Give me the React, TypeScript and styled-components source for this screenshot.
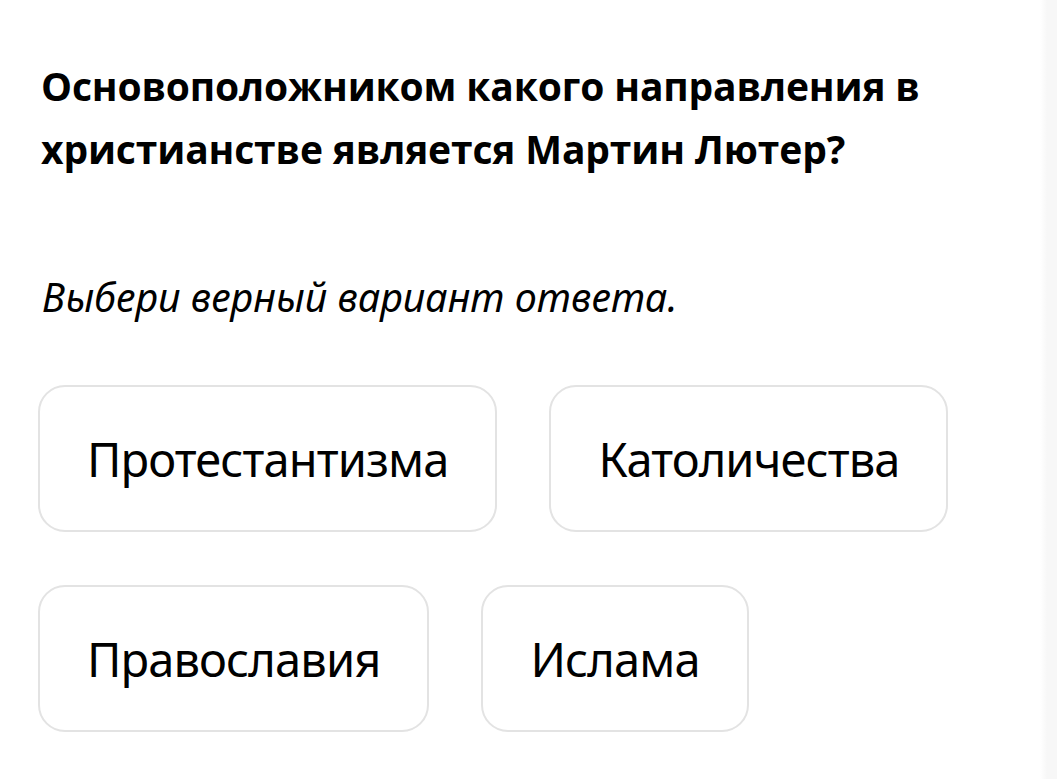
import React from "react";
import styled, { createGlobalStyle } from "styled-components";

const GlobalStyle = createGlobalStyle`
  html, body {
    margin: 0;
    padding: 0;
    background: #ffffff;
  }
  body {
    font-family: "Noto Sans", "Open Sans", sans-serif;
    color: #000;
  }
`;

const Page = styled.div`
  width: 1057px;
  height: 779px;
  box-sizing: border-box;
  display: flex;
  overflow: hidden;
  background: #fff;
`;

const Content = styled.main`
  flex: 1;
  padding: 54px 0 0 38px;
  display: flex;
  flex-direction: column;
  align-items: flex-start;
`;

const Edge = styled.div`
  width: 17px;
  flex: none;
  background: linear-gradient(to right, #ffffff 0px, #f7f7f7 7px, #f7f7f7 100%);
`;

const Question = styled.h1`
  margin: 0 0 0 3px;
  font-family: "Open Sans", "Noto Sans", sans-serif;
  font-weight: 700;
  font-size: 39px;
  line-height: 63px;
  letter-spacing: -0.15px;
  color: #000;
`;

const Hint = styled.p`
  margin: 92px 0 0 4px;
  font-family: "Noto Sans", sans-serif;
  font-style: italic;
  font-size: 39.5px;
  line-height: 50px;
  letter-spacing: 0;
  color: #000;
`;

const Options = styled.div`
  margin-top: 63px;
  display: flex;
  flex-direction: column;
  gap: 53px;
`;

const OptionRow = styled.div`
  display: flex;
  gap: 52px;
`;

const OptionButton = styled.button`
  box-sizing: border-box;
  height: 147px;
  padding: 0 47px;
  border: 2px solid #e3e3e3;
  border-radius: 27px;
  background: #fff;
  font-family: "Noto Sans", sans-serif;
  font-size: 47px;
  letter-spacing: -0.9px;
  font-weight: 400;
  color: #000;
  cursor: pointer;
  display: flex;
  align-items: center;
  justify-content: center;
`;

const rows = [
  ["Протестантизма", "Католичества"],
  ["Православия", "Ислама"],
];

export default function App() {
  return (
    <>
      <GlobalStyle />
      <Page>
        <Content>
          <Question>
            Основоположником какого направления в
            <br />
            христианстве является Мартин Лютер?
          </Question>
          <Hint>Выбери верный вариант ответа.</Hint>
          <Options>
            {rows.map((row, i) => (
              <OptionRow key={i}>
                {row.map((label) => (
                  <OptionButton key={label}>{label}</OptionButton>
                ))}
              </OptionRow>
            ))}
          </Options>
        </Content>
        <Edge />
      </Page>
    </>
  );
}
